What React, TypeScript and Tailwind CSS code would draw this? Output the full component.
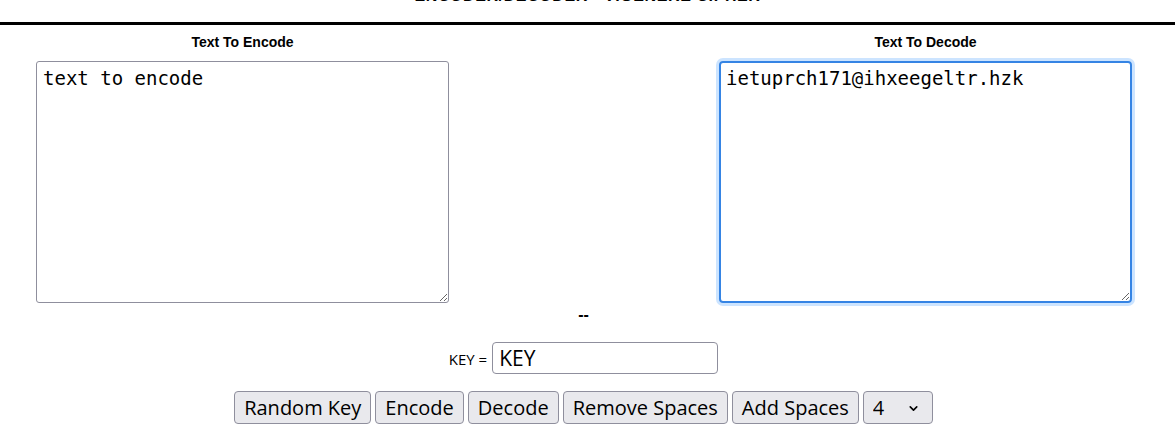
import { ChevronDown } from "lucide-react";

const buttons = ["Random Key", "Encode", "Decode", "Remove Spaces", "Add Spaces"];

export default function App() {
  return (
    <div className="w-[1175px] h-[436px] overflow-hidden bg-white text-black font-['Liberation_Sans',Arial,sans-serif]">
      <div className="border-b-[3px] border-black text-center">
        <h1 className="-mt-[12px] mb-[18px] text-[16px] leading-[16px] font-bold tracking-[0.6px]">
          ENCODER/DECODER - VIGENERE CIPHER
        </h1>
      </div>

      <div className="w-[1167px] flex flex-col items-center">
        <div className="w-full flex justify-between pl-[36px] pr-[35px]">
          <div className="flex flex-col items-center">
            <p className="pt-[9px] text-[14px] leading-[16px] font-bold">Text To Encode</p>
            <textarea
              defaultValue="text to encode"
              className="mt-[11px] w-[413px] h-[242px] border border-[#8f8f9d] rounded-[3px] px-[6px] pt-[5px] text-[19px] leading-[22px] font-['DejaVu_Sans_Mono',monospace] outline-none resize"
            />
          </div>
          <div className="flex flex-col items-center">
            <p className="pt-[9px] text-[14px] leading-[16px] font-bold">Text To Decode</p>
            <textarea
              defaultValue="ietuprch171@ihxeegeltr.hzk"
              className="mt-[11px] w-[413px] h-[242px] border-2 border-[#3584e4] rounded-[4px] shadow-[0_0_0_3px_#cce4ff] px-[5px] pt-[4px] text-[19px] leading-[22px] font-['DejaVu_Sans_Mono',monospace] outline-none resize"
            />
          </div>
        </div>

        <p className="mt-[3px] text-[16px] leading-[18px] font-bold">--</p>

        <div className="mt-[18px] flex items-center gap-[5px] font-['Open_Sans','Noto_Sans',sans-serif]">
          <span className="text-[15px] pt-[3px]">KEY =</span>
          <input
            defaultValue="KEY"
            className="w-[226px] h-[32px] border border-[#8f8f9d] rounded-[4px] px-[6px] text-[21px] outline-none"
          />
        </div>

        <div className="mt-[17px] flex items-center gap-[4px] font-['Open_Sans','Noto_Sans',sans-serif]">
          {buttons.map((b) => (
            <button
              key={b}
              className="h-[33px] px-[9px] bg-[#e9e9ed] border border-[#8f8f9d] rounded-[4px] text-[20px] leading-none"
            >
              {b}
            </button>
          ))}
          <div className="relative">
            <select
              defaultValue="4"
              className="appearance-none w-[70px] h-[33px] pl-[9px] bg-[#e9e9ed] border border-[#8f8f9d] rounded-[4px] text-[20px] outline-none"
            >
              <option>1</option>
              <option>2</option>
              <option>3</option>
              <option>4</option>
              <option>5</option>
            </select>
            <ChevronDown className="absolute right-[13px] top-[11px] size-[13px] pointer-events-none" strokeWidth={3} />
          </div>
        </div>
      </div>
    </div>
  );
}
